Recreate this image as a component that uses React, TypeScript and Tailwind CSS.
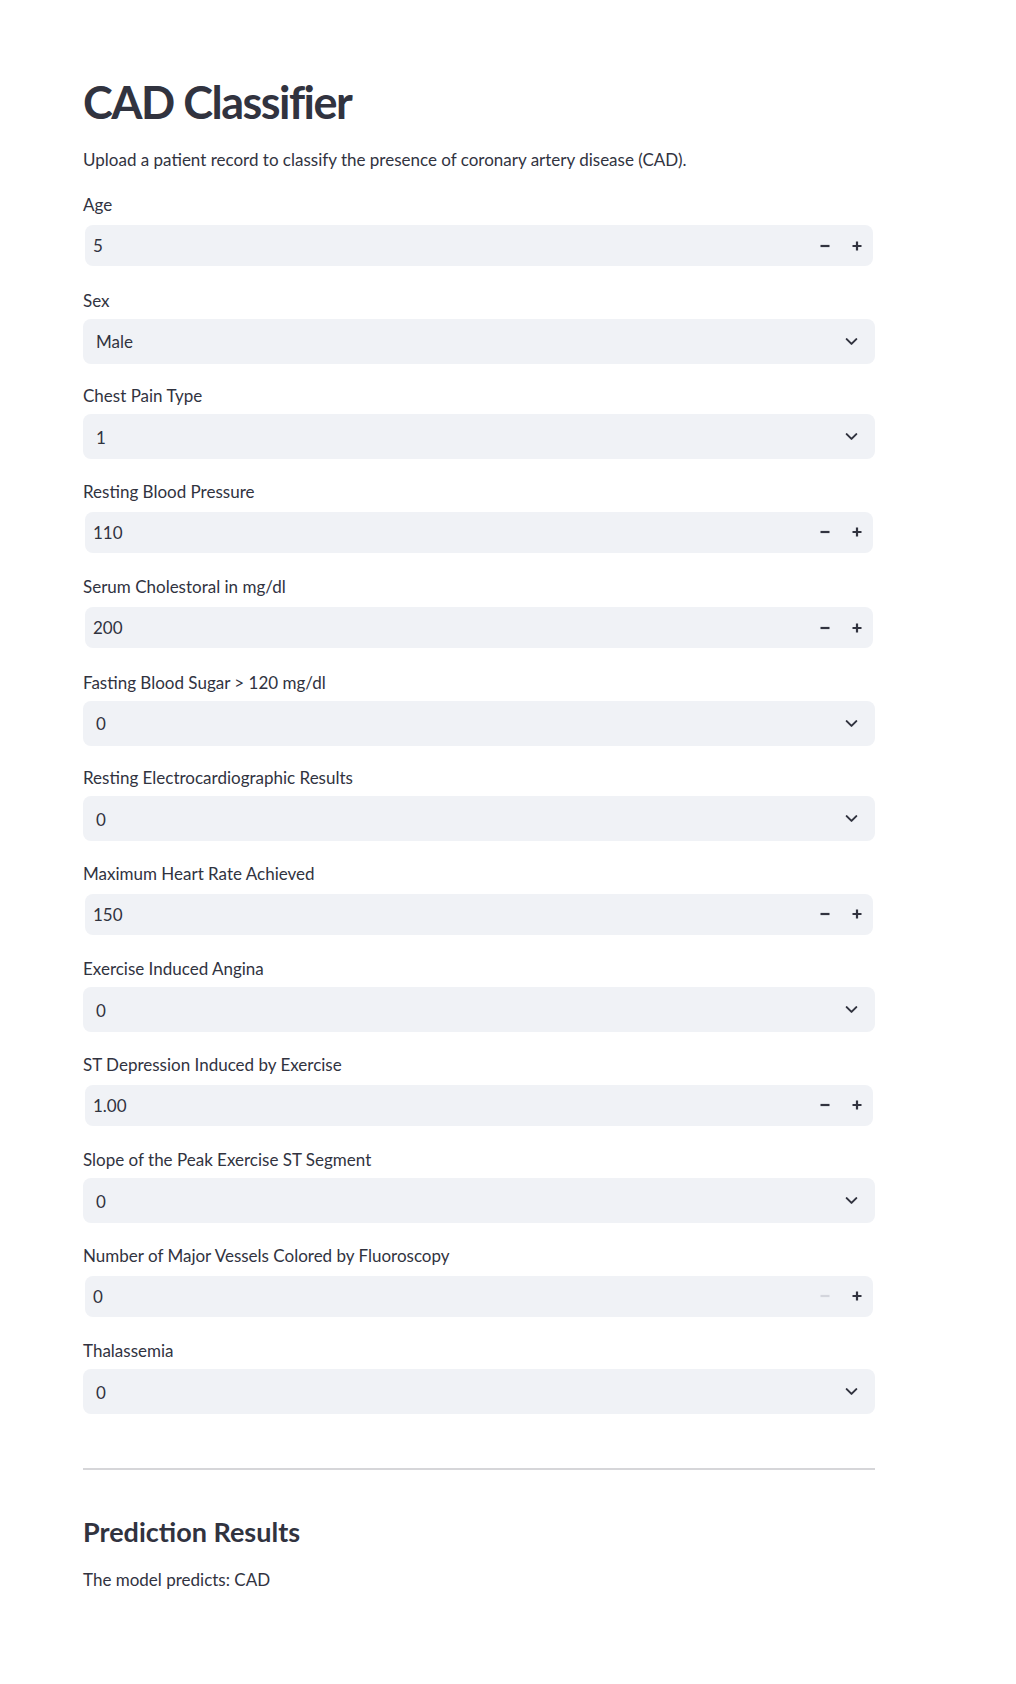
import type { ReactNode } from "react";

type Field =
	| { kind: "number"; label: string; value: string; minDisabled?: boolean }
	| { kind: "select"; label: string; value: string };

const fields: Field[] = [
	{ kind: "number", label: "Age", value: "5" },
	{ kind: "select", label: "Sex", value: "Male" },
	{ kind: "select", label: "Chest Pain Type", value: "1" },
	{ kind: "number", label: "Resting Blood Pressure", value: "110" },
	{ kind: "number", label: "Serum Cholestoral in mg/dl", value: "200" },
	{ kind: "select", label: "Fasting Blood Sugar > 120 mg/dl", value: "0" },
	{ kind: "select", label: "Resting Electrocardiographic Results", value: "0" },
	{ kind: "number", label: "Maximum Heart Rate Achieved", value: "150" },
	{ kind: "select", label: "Exercise Induced Angina", value: "0" },
	{ kind: "number", label: "ST Depression Induced by Exercise", value: "1.00" },
	{ kind: "select", label: "Slope of the Peak Exercise ST Segment", value: "0" },
	{
		kind: "number",
		label: "Number of Major Vessels Colored by Fluoroscopy",
		value: "0",
		minDisabled: true,
	},
	{ kind: "select", label: "Thalassemia", value: "0" },
];

function MinusIcon({ faded }: { faded?: boolean }) {
	return (
		<svg width="12" height="12" viewBox="0 0 12 12">
			<path
				d="M1.5 6h9"
				stroke={faded ? "#d3d5dc" : "#31333f"}
				strokeWidth="2.2"
			/>
		</svg>
	);
}

function PlusIcon() {
	return (
		<svg width="12" height="12" viewBox="0 0 12 12">
			<path d="M1.5 6h9M6 1.5v9" stroke="#31333f" strokeWidth="2.2" />
		</svg>
	);
}

function ChevronDown() {
	return (
		<svg width="15" height="15" viewBox="0 0 14 14" fill="none">
			<path
				d="M2.5 4.8L7 9.2l4.5-4.4"
				stroke="#31333f"
				strokeWidth="1.9"
				strokeLinecap="round"
				strokeLinejoin="round"
			/>
		</svg>
	);
}

function FieldBlock({ label, children }: { label: string; children: ReactNode }) {
	return (
		<div className="h-[95.5px]">
			<div className="h-[21px] text-[17px] leading-[21px]">{label}</div>
			<div className="mt-[8px] h-[45px]">{children}</div>
		</div>
	);
}

function NumberInput({ value, minDisabled }: { value: string; minDisabled?: boolean }) {
	return (
		<div className="h-full px-[2px] pt-[2px] pb-[2px]">
			<div className="flex h-[41px] items-center rounded-lg bg-[#f0f2f6]">
				<div className="flex-1 pl-[8px] pt-[1px] text-[17px]">{value}</div>
				<div className="flex w-[32px] justify-center">
					<MinusIcon faded={minDisabled} />
				</div>
				<div className="flex w-[32px] justify-center">
					<PlusIcon />
				</div>
			</div>
		</div>
	);
}

function SelectInput({ value }: { value: string }) {
	return (
		<div className="flex h-[45px] items-center rounded-lg bg-[#f0f2f6] pl-[13px] pr-[16px]">
			<div className="flex-1 pt-[2px] text-[17px]">{value}</div>
			<ChevronDown />
		</div>
	);
}

export default function App() {
	return (
		<div
			className="min-h-[1684px] bg-white text-[#31333f]"
			style={{ fontFamily: "Lato, 'Noto Sans', sans-serif" }}
		>
			<div className="ml-[83px] w-[792px] pt-[76px]">
				<h1 className="h-[53px] text-[45px] font-bold leading-[53px] tracking-[-1.5px]">
					CAD Classifier
				</h1>
				<p className="mt-[19px] h-[24px] text-[17px] leading-[24px]">
					Upload a patient record to classify the presence of coronary artery
					disease (CAD).
				</p>
				<div className="mt-[22px]">
					{fields.map((f) => (
						<FieldBlock key={f.label} label={f.label}>
							{f.kind === "number" ? (
								<NumberInput value={f.value} minDisabled={f.minDisabled} />
							) : (
								<SelectInput value={f.value} />
							)}
						</FieldBlock>
					))}
				</div>
				<hr className="mt-[32px] border-0 border-t-2 border-[#d6d6d9]" />
				<h3 className="mt-[45px] h-[34px] text-[27px] font-bold leading-[34px]">
					Prediction Results
				</h3>
				<p className="mt-[19px] text-[17px] leading-[24px]">
					The model predicts: CAD
				</p>
			</div>
		</div>
	);
}
